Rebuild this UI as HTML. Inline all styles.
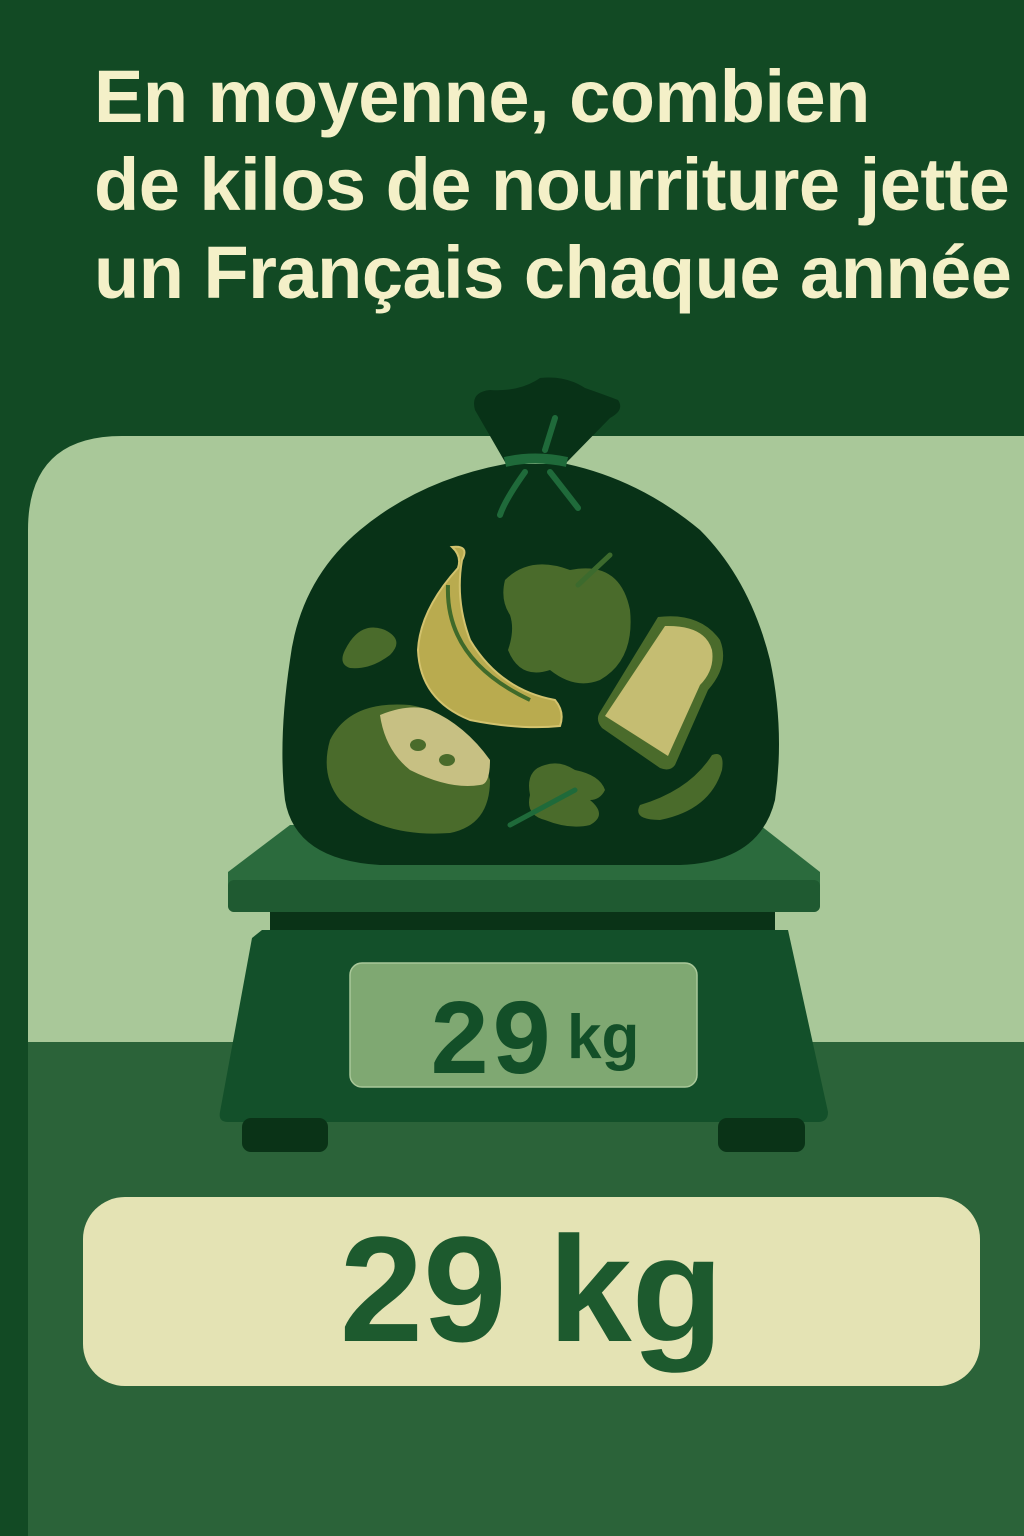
<!DOCTYPE html>
<html><head><meta charset="utf-8"><style>
html,body{margin:0;padding:0}
body{width:1024px;height:1536px;position:relative;overflow:hidden;background:#124a24;font-family:"Liberation Sans",sans-serif}
.t{position:absolute;left:94px;top:53px;color:#f4f0c8;font-weight:bold;font-size:74px;line-height:88px;letter-spacing:-0.5px;white-space:nowrap}
.card{position:absolute;left:83px;top:1197px;width:897px;height:189px;border-radius:42px;background:#e4e3b4;text-align:center;font-weight:bold;font-size:150px;line-height:184px;color:#1d5a2e}
</style></head><body>
<svg width="1024" height="1536" style="position:absolute;left:0;top:0">
<path d="M28 1536V530Q28 436 122 436H1024V1042H28Z" fill="#a9c899"/>
<rect x="28" y="1042" width="996" height="494" fill="#2b6339"/>
<path d="M228 872L290 825H760L820 872V905Q820 912 812 912H236Q228 912 228 905Z" fill="#2b6b3d"/>
<rect x="228" y="880" width="592" height="32" rx="6" fill="#1f5a31"/>
<rect x="270" y="912" width="505" height="18" fill="#0a3317"/>
<path d="M262 930H788L828 1112Q828 1122 818 1122H228Q218 1122 220 1112L252 938Z" fill="#13502a"/>
<rect x="242" y="1118" width="86" height="34" rx="9" fill="#0a3317"/>
<rect x="718" y="1118" width="87" height="34" rx="9" fill="#0a3317"/>
<rect x="350" y="963" width="347" height="124" rx="12" fill="#7fa872" stroke="#a9c899" stroke-width="1.5"/>
<text x="428" y="1073" font-family="Liberation Mono,monospace" font-weight="bold" font-size="108" fill="#134f28" textLength="125" lengthAdjust="spacingAndGlyphs">29</text>
<text x="567" y="1058" font-family="Liberation Sans,sans-serif" font-weight="bold" font-size="62" fill="#134f28">kg</text>
<path d="M505 464Q420 480 360 530Q300 580 290 660Q278 740 285 800Q295 860 380 865H680Q760 862 775 800Q785 730 770 660Q750 580 700 530Q640 480 567 464Z" fill="#083217"/>
<path d="M505 462L475 410Q470 392 490 390Q520 392 540 378Q565 375 585 388Q605 395 618 400Q625 410 610 418L567 462Z" fill="#083217"/>
<path d="M505 462Q535 455 567 462" stroke="#1f6a3a" stroke-width="10" fill="none"/>
<path d="M555 418L545 450M525 472Q505 500 500 515M550 472Q568 495 578 508" stroke="#1f6a3a" stroke-width="6" stroke-linecap="round" fill="none"/>
<path d="M452 547Q462 556 458 568Q420 610 418 650Q420 700 470 720Q520 730 560 726Q565 712 555 700Q500 690 470 640Q455 600 462 560Q470 545 452 547Z" fill="#b9ab4f" stroke="#d3c36e" stroke-width="2"/>
<path d="M448 585Q445 660 530 700" stroke="#3f6a2a" stroke-width="4" fill="none"/>
<path d="M505 580Q530 555 570 570Q620 560 630 610Q635 660 600 680Q575 690 550 670Q520 680 508 650Q515 630 510 615Q500 600 505 580Z" fill="#4a6b2b"/>
<path d="M578 585L610 555" stroke="#3c6a2d" stroke-width="5" stroke-linecap="round"/>
<path d="M345 650Q360 620 385 630Q405 640 390 655Q370 670 350 668Q338 664 345 650Z" fill="#4a6b2b"/>
<path d="M658 617Q700 612 720 640Q730 665 708 690L675 765Q670 772 660 768L602 728Q595 720 600 712Z" fill="#4a6b2b"/>
<path d="M665 626Q705 625 712 650Q715 670 700 685L668 756L605 716Z" fill="#c5bd72"/>
<path d="M330 740Q350 700 410 705Q470 715 490 780Q490 825 450 833Q380 838 340 800Q320 775 330 740Z" fill="#4a6b2b"/>
<path d="M380 715Q410 703 430 710Q465 725 490 760Q490 785 480 785Q450 790 410 770Q385 750 380 715Z" fill="#c7c083"/>
<ellipse cx="418" cy="745" rx="8" ry="6" fill="#4a6b2b"/><ellipse cx="447" cy="760" rx="8" ry="6" fill="#4a6b2b"/>
<path d="M530 795Q525 770 545 765Q560 760 575 770Q600 775 605 790Q600 800 590 800Q608 815 590 825Q570 830 545 820Q525 815 530 795Z" fill="#4a6b2b"/>
<path d="M510 825L575 790" stroke="#1f6a3a" stroke-width="5" stroke-linecap="round"/>
<path d="M640 805Q690 790 712 755Q725 750 722 770Q710 810 660 820Q632 820 640 805Z" fill="#4a6b2b"/>
</svg>
<div class="t">En moyenne, combien<br>de kilos de nourriture jette<br>un Français chaque année</div>
<div class="card">29 kg</div>
</body></html>
